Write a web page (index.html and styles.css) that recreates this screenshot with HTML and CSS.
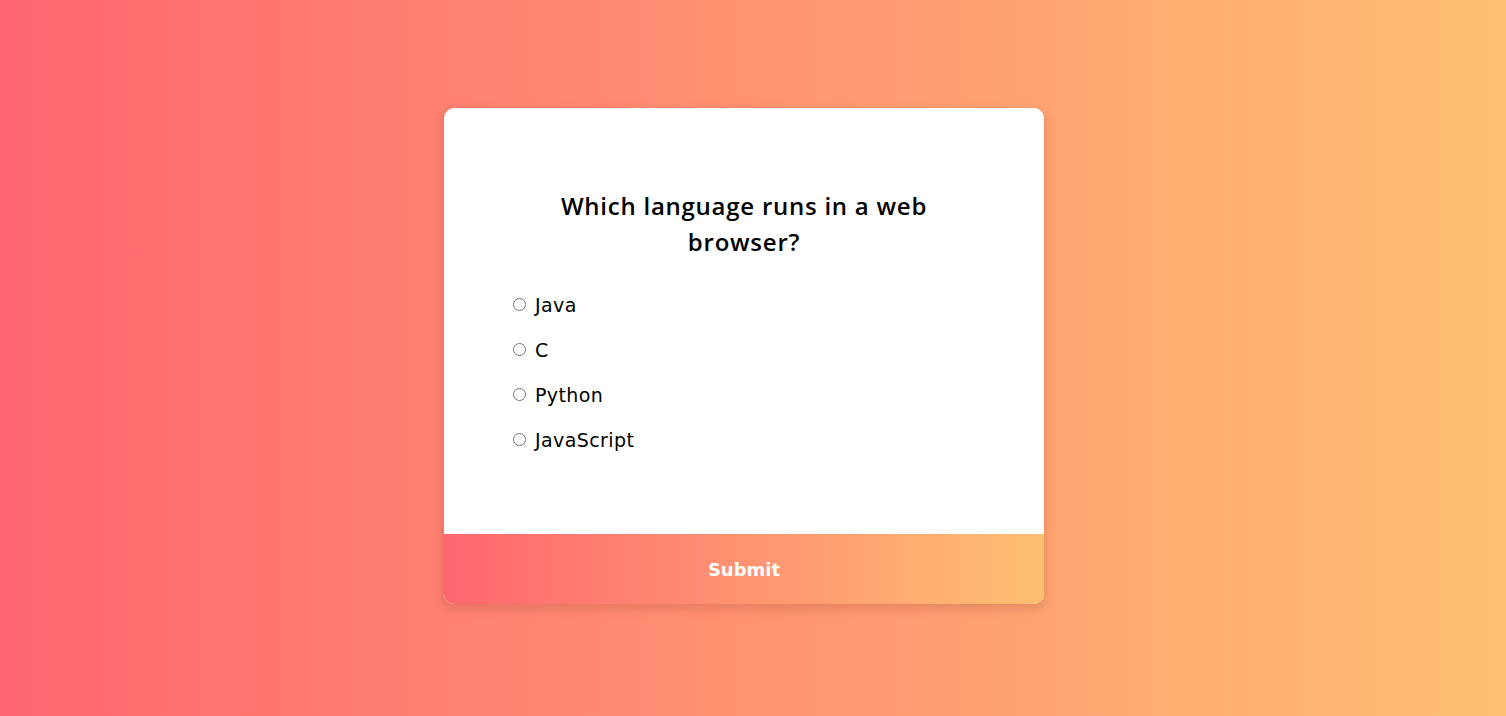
FILE: index.html
```
<!DOCTYPE html>
<html lang="en">
<head>
<meta charset="utf-8">
<title>Quiz</title>
<link rel="stylesheet" href="styles.css">
</head>
<body>
<div class="quiz">
  <div class="quiz-header">
    <h2 class="question">Which language runs in a web browser?</h2>
    <ul class="answers">
      <li><input type="radio" name="answer" id="a"><label for="a">Java</label></li>
      <li><input type="radio" name="answer" id="b"><label for="b">C</label></li>
      <li><input type="radio" name="answer" id="c"><label for="c">Python</label></li>
      <li><input type="radio" name="answer" id="d"><label for="d">JavaScript</label></li>
    </ul>
  </div>
  <button class="submit">Submit</button>
</div>
</body>
</html>
```

FILE: styles.css
```
* { box-sizing: border-box; }
html, body { height: 100%; }
body {
  margin: 0;
  padding-right: 18px;
  font-family: "DejaVu Sans", "Open Sans", sans-serif;
  background: linear-gradient(to right, #ff6670, #ffc072);
  display: flex;
  align-items: center;
  justify-content: center;
  overflow: hidden;
}
.quiz {
  width: 600px;
  background: #fff;
  border-radius: 10px;
  overflow: hidden;
  box-shadow: 0 4px 10px 2px rgba(150, 70, 50, 0.22);
  margin-top: -4px;
}
.quiz-header {
  padding: 64px;
}
.question {
  margin: 0;
  padding: 16px 36px;
  text-align: center;
  font-family: "Open Sans", "DejaVu Sans", sans-serif;
  font-size: 24px;
  line-height: 36px;
  font-weight: 600;
  letter-spacing: 0.75px;
  color: #000;
}
.answers {
  list-style: none;
  margin: 0;
  padding: 14px 0 16px;
  display: flex;
  flex-direction: column;
  gap: 16px;
}
.answers li {
  display: flex;
  align-items: center;
  height: 29px;
  font-size: 19px;
  letter-spacing: 0.4px;
  color: #000;
}
.answers input {
  margin: 0 9px 0 5px;
  width: 13px;
  height: 13px;
}
.submit {
  display: block;
  width: 100%;
  height: 70px;
  border: none;
  margin: 0;
  background: linear-gradient(to right, #ff6670, #ffc072);
  color: #fff;
  font-family: "DejaVu Sans", "Open Sans", sans-serif;
  font-size: 18px;
  font-weight: 700;
  cursor: pointer;
}
```
